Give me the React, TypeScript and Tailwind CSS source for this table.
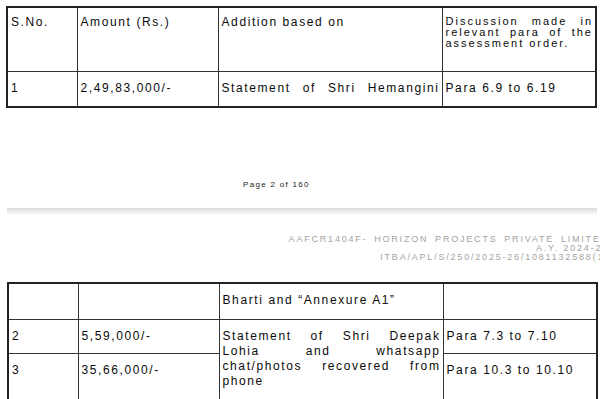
const font = "font-['Liberation_Sans',Arial,sans-serif]"

function J({ children }: { children: React.ReactNode }) {
  // one justified line, the way the pdf lays it out
  return <div className="[text-align-last:justify]">{children}</div>
}

function Cols() {
  return (
    <colgroup>
      <col className="w-[70px]" />
      <col className="w-[141px]" />
      <col className="w-[224px]" />
      <col className="w-[154px]" />
    </colgroup>
  )
}

const td = "border border-[#333] align-top pl-[3px] pr-[2px]"

export default function App() {
  return (
    <div className={`w-[600px] h-[399px] overflow-hidden bg-white text-[#0a0a0a] ${font}`}>
      <div className="w-[620px] pt-[6px]">

        <table className="ml-[6px] table-fixed border-collapse border-2 border-[#222] text-[12px] tracking-[1.6px]">
          <Cols />
          <tbody>
            <tr className="h-[64px] leading-[11px]">
              <td className={`${td} pt-[9px]`}>S.No.</td>
              <td className={`${td} pt-[9px]`}>Amount (Rs.)</td>
              <td className={`${td} pt-[9px]`}>Addition based on</td>
              <td className={`${td} pt-[8px] text-[11px] tracking-[2px]`}>
                <J>Discussion made in</J>
                <J>relevant para of the</J>
                <div>assessment order.</div>
              </td>
            </tr>
            <tr className="h-[36px] leading-[15px]">
              <td className={`${td} pt-[9px]`}>1</td>
              <td className={`${td} pt-[9px]`}>2,49,83,000/-</td>
              <td className={`${td} pt-[9px] pl-[2px] pr-0`}>
                <J>Statement of Shri Hemangini</J>
              </td>
              <td className={`${td} pt-[9px]`}>Para 6.9 to 6.19</td>
            </tr>
          </tbody>
        </table>

        <div className="mt-[72px] ml-[243px] text-[8px] leading-[10px] tracking-[1.3px] text-[#1a1a1a]">
          Page 2 of 160
        </div>

        <div className="mt-[18px] ml-[7px] w-[590px] h-[6px] bg-gradient-to-b from-[#dcdcdc] to-[#f6f6f6]"></div>

        <div className="mt-[21px] w-[609px] text-right text-[9px] leading-[9px] tracking-[1.8px] text-[#a3a3a3]">
          <div className="[word-spacing:2.5px]">AAFCR1404F- HORIZON PROJECTS PRIVATE LIMITED</div>
          <div>A.Y. 2024-25</div>
          <div>ITBA/APL/S/250/2025-26/1081132588(1)</div>
        </div>

        <table className="mt-[20px] ml-[7px] table-fixed border-collapse border-2 border-[#222] text-[12px] tracking-[1.6px] leading-[15px]">
          <Cols />
          <tbody>
            <tr className="h-[36px]">
              <td className={`${td} pt-[9px]`}></td>
              <td className={`${td} pt-[9px]`}></td>
              <td className={`${td} pt-[9px] pl-[2px]`}>Bharti and “Annexure A1”</td>
              <td className={`${td} pt-[9px]`}></td>
            </tr>
            <tr className="h-[34px]">
              <td className={`${td} pt-[9px]`}>2</td>
              <td className={`${td} pt-[9px]`}>5,59,000/-</td>
              <td rowSpan={2} className={`${td} pt-[9px] pl-[2px] pr-0`}>
                <J>Statement of Shri Deepak</J>
                <J>Lohia and whatsapp</J>
                <J>chat/photos recovered from</J>
                <div>phone</div>
              </td>
              <td className={`${td} pt-[9px]`}>Para 7.3 to 7.10</td>
            </tr>
            <tr className="h-[50px]">
              <td className={`${td} pt-[9px]`}>3</td>
              <td className={`${td} pt-[9px]`}>35,66,000/-</td>
              <td className={`${td} pt-[9px]`}>Para 10.3 to 10.10</td>
            </tr>
          </tbody>
        </table>

      </div>
    </div>
  )
}
